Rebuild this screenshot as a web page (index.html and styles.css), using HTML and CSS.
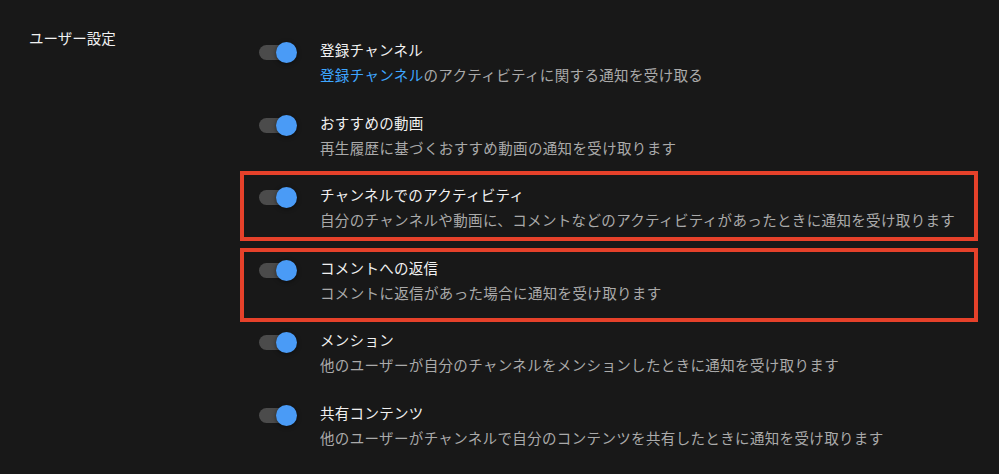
FILE: index.html
```html
<!DOCTYPE html>
<html lang="ja">
<head>
    <meta charset="UTF-8">
    <title>通知の設定</title>
    <link rel="stylesheet" href="styles.css">
</head>
<body>
    <div id="page">
        <div class="section-label">ユーザー設定</div>
        <ul id="list">
            <li class="row">
                <span class="toggle"><span class="knob"></span></span>
                <div class="text">
                    <div class="title">登録チャンネル</div>
                    <div class="desc"><a href="#">登録チャンネル</a>のアクティビティに関する通知を受け取る</div>
                </div>
            </li>
            <li class="row">
                <span class="toggle"><span class="knob"></span></span>
                <div class="text">
                    <div class="title">おすすめの動画</div>
                    <div class="desc">再生履歴に基づくおすすめ動画の通知を受け取ります</div>
                </div>
            </li>
            <li class="row marked">
                <span class="toggle"><span class="knob"></span></span>
                <div class="text">
                    <div class="title">チャンネルでのアクティビティ</div>
                    <div class="desc">自分のチャンネルや動画に、コメントなどのアクティビティがあったときに通知を受け取ります</div>
                </div>
            </li>
            <li class="row marked low">
                <span class="toggle"><span class="knob"></span></span>
                <div class="text">
                    <div class="title">コメントへの返信</div>
                    <div class="desc">コメントに返信があった場合に通知を受け取ります</div>
                </div>
            </li>
            <li class="row">
                <span class="toggle"><span class="knob"></span></span>
                <div class="text">
                    <div class="title">メンション</div>
                    <div class="desc">他のユーザーが自分のチャンネルをメンションしたときに通知を受け取ります</div>
                </div>
            </li>
            <li class="row">
                <span class="toggle"><span class="knob"></span></span>
                <div class="text">
                    <div class="title">共有コンテンツ</div>
                    <div class="desc">他のユーザーがチャンネルで自分のコンテンツを共有したときに通知を受け取ります</div>
                </div>
            </li>
        </ul>
    </div>
</body>
</html>
```

FILE: styles.css
```css
*{
    margin: 0;
    padding: 0;
    box-sizing: border-box;
}
html, body{
    background: #181818;
    height: 100%;
}
body{
    font-family: "Noto Sans CJK JP", "Noto Sans", sans-serif;
    color: #f1f1f1;
    overflow: hidden;
}
ul{
    list-style: none;
}
#page{
    display: flex;
    padding: 26px 0 0 29px;
}
.section-label{
    width: 212px;
    font-size: 14.5px;
    line-height: 20px;
    margin-top: 2px;
}
#list{
    width: 739px;
}
.row{
    position: relative;
    height: 72.5px;
    display: flex;
    align-items: flex-start;
    padding: 14px 0 0 18px;
}
/* annotation frames */
.row.marked::after{
    content: "";
    position: absolute;
    left: -1px;
    right: 2px;
    top: 0;
    bottom: 3px;
    border: 4px solid #e6412a;
}
.row.marked.low::after{
    top: 4.5px;
    bottom: -6px;
}
.toggle{
    position: relative;
    width: 36px;
    height: 15px;
    margin-top: 5px;
    border-radius: 8px;
    background: #4b4b4b;
    flex-shrink: 0;
}
.knob{
    position: absolute;
    right: -2px;
    top: -3px;
    width: 21px;
    height: 21px;
    border-radius: 50%;
    background: #4a9bf6;
    box-shadow: 0 1px 4px rgba(0,0,0,0.5);
}
.text{
    margin-left: 25px;
}
.title{
    font-size: 14.5px;
    line-height: 20px;
    letter-spacing: 0.3px;
}
.desc{
    margin-top: 5px;
    font-size: 14.5px;
    line-height: 20px;
    color: #aaaaaa;
    letter-spacing: 0.35px;
}
.desc a{
    color: #3ea6ff;
    text-decoration: none;
}
```
